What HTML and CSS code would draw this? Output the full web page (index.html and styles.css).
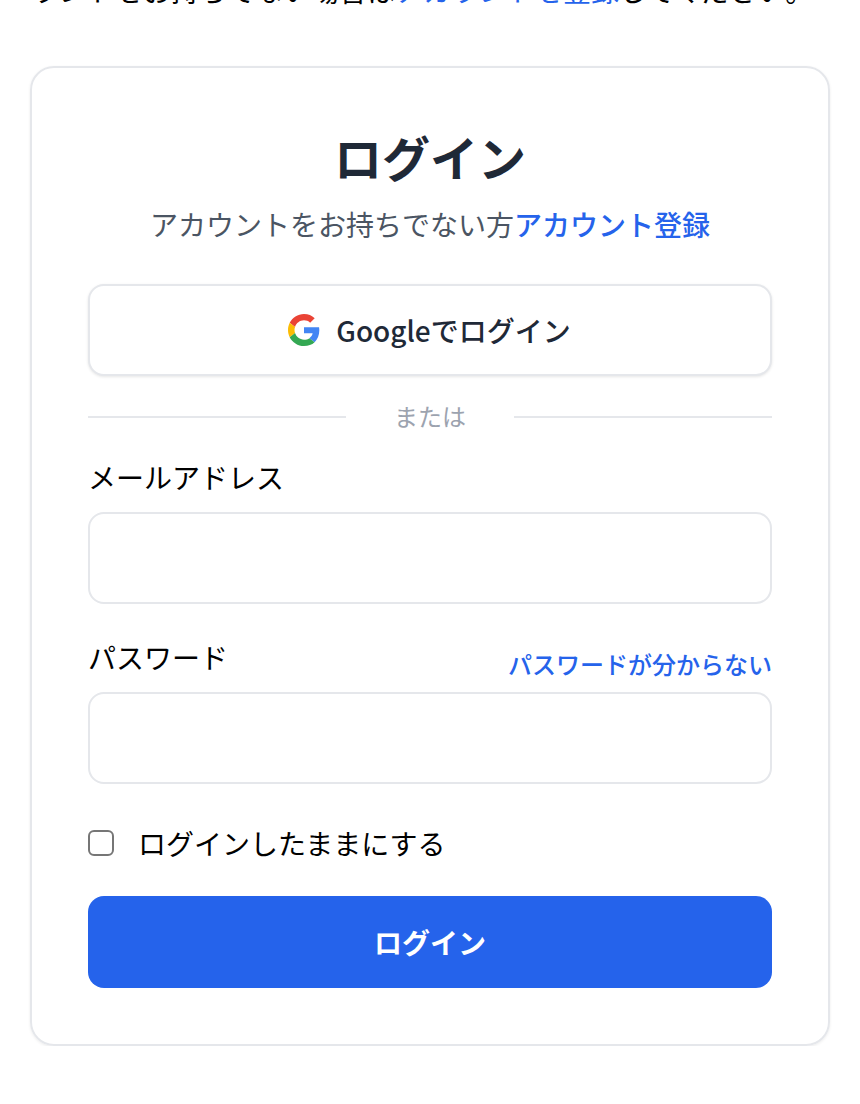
FILE: index.html
```html
<!DOCTYPE html>
<html lang="ja">
<head>
	<meta charset="UTF-8">
	<title>ログイン</title>
	<link rel="stylesheet" href="styles.css">
</head>
<body>
	<div class="notice">
		<p>ウントをお持ちでない場合は<a href="#">アカウントを登録</a>してください。</p>
	</div>

	<div class="card">
		<h1>ログイン</h1>
		<p class="sub">アカウントをお持ちでない方<a href="#">アカウント登録</a></p>

		<button class="google" type="button">
			<svg class="g-icon" width="32" height="32" viewBox="0 0 48 48">
				<path fill="#EA4335" d="M24 9.5c3.54 0 6.71 1.22 9.21 3.6l6.85-6.85C35.9 2.38 30.47 0 24 0 14.62 0 6.51 5.38 2.56 13.22l7.98 6.19C12.43 13.72 17.74 9.5 24 9.5z"/>
				<path fill="#4285F4" d="M46.98 24.55c0-1.57-.15-3.09-.38-4.55H24v9.02h12.94c-.58 2.96-2.26 5.48-4.78 7.18l7.73 6c4.51-4.18 7.09-10.36 7.09-17.65z"/>
				<path fill="#FBBC05" d="M10.53 28.59c-.48-1.45-.76-2.99-.76-4.59s.27-3.14.76-4.59l-7.98-6.19C.92 16.46 0 20.12 0 24c0 3.88.92 7.54 2.56 10.78l7.97-6.19z"/>
				<path fill="#34A853" d="M24 48c6.48 0 11.93-2.13 15.89-5.81l-7.73-6c-2.15 1.45-4.92 2.3-8.16 2.3-6.26 0-11.57-4.22-13.47-9.91l-7.98 6.19C6.51 42.62 14.62 48 24 48z"/>
			</svg>
			<span>Googleでログイン</span>
		</button>

		<div class="divider"><span>または</span></div>

		<form>
			<label class="label" for="email">メールアドレス</label>
			<input class="field" id="email" type="email">

			<div class="pw-row">
				<label class="label" for="password">パスワード</label>
				<a class="forgot" href="#">パスワードが分からない</a>
			</div>
			<input class="field" id="password" type="password">

			<label class="remember">
				<input class="check" type="checkbox">
				<span>ログインしたままにする</span>
			</label>

			<button class="submit" type="button">ログイン</button>
		</form>
	</div>
</body>
</html>
```

FILE: styles.css
```css
* {
	box-sizing: border-box;
}

body {
	margin: 0;
	background: #fff;
	color: #000;
	font-family: "Noto Sans CJK JP", "Noto Sans", sans-serif;
}

a {
	color: #2563eb;
	text-decoration: none;
}

.notice {
	height: 10px;
	overflow: hidden;
	display: flex;
	align-items: flex-end;
	padding-left: 31px;
	font-size: 28px;
	line-height: 40px;
}

.notice p {
	margin: 0;
	flex: none;
}

.card {
	width: 800px;
	height: 980px;
	margin: 56px 0 0 30px;
	padding: 56px 56px 0;
	border: 2px solid #e5e7eb;
	border-radius: 24px;
	box-shadow: 0 1px 3px rgba(0, 0, 0, .08);
}

h1 {
	margin: 0;
	text-align: center;
	font-size: 48px;
	line-height: 64px;
	font-weight: 700;
	color: #1f2937;
}

.sub {
	margin: 16px 0 0;
	text-align: center;
	font-size: 28px;
	line-height: 40px;
	color: #4b5563;
}

.sub a {
	font-weight: 500;
}

.google {
	display: flex;
	align-items: center;
	justify-content: center;
	gap: 16px;
	width: 684px;
	height: 92px;
	margin-top: 40px;
	background: #fff;
	border: 2px solid #e5e7eb;
	border-radius: 16px;
	box-shadow: 0 1px 3px rgba(0, 0, 0, .1);
	color: #1f2937;
	font-family: inherit;
	font-size: 28px;
	font-weight: 500;
}

.g-icon {
	margin-left: -1px;
}

.divider {
	display: flex;
	align-items: center;
	gap: 48px;
	margin-top: 21px;
	height: 40px;
	font-size: 24px;
	color: #9ca3af;
}

.divider span {
	padding-bottom: 4px;
}

.divider::before,
.divider::after {
	content: "";
	flex: 1;
	height: 2px;
	background: #e5e7eb;
}

.label {
	display: block;
	font-size: 28px;
	line-height: 40px;
}

form {
	margin-top: 20px;
}

.field {
	display: block;
	width: 684px;
	height: 92px;
	margin-top: 15px;
	border: 2px solid #e5e7eb;
	border-radius: 16px;
	background: #fff;
}

.pw-row {
	display: flex;
	justify-content: space-between;
	align-items: flex-start;
	margin-top: 33px;
}

.forgot {
	font-size: 24px;
	line-height: 40px;
	font-weight: 500;
	margin-top: 7px;
}

.pw-row + .field {
	margin-top: 8px;
}

.remember {
	display: flex;
	align-items: center;
	gap: 24px;
	margin-top: 39px;
	font-size: 28px;
	line-height: 40px;
}

.check {
	appearance: none;
	flex: none;
	width: 26px;
	height: 26px;
	margin: 0;
	border: 2px solid #767676;
	border-radius: 6px;
	background: #fff;
}

.submit {
	display: block;
	width: 684px;
	height: 92px;
	margin-top: 33px;
	border: 0;
	border-radius: 16px;
	background: #2563eb;
	color: #fff;
	font-family: inherit;
	font-size: 28px;
	font-weight: 700;
}
```
